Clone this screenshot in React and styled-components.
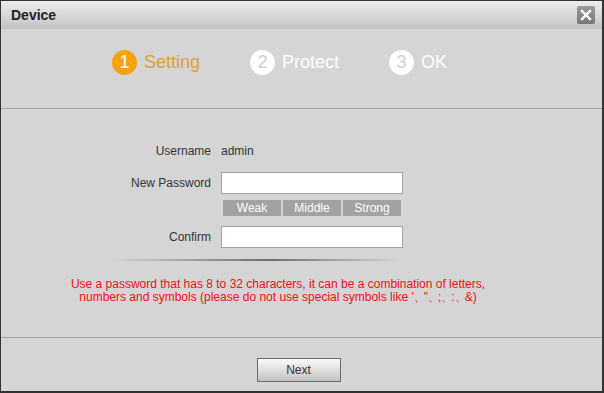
import React from 'react';
import styled, { createGlobalStyle } from 'styled-components';

const GlobalStyle = createGlobalStyle`
  html, body {
    margin: 0;
    padding: 0;
    background: #2e2e2e;
  }
  * {
    box-sizing: border-box;
  }
`;

const steps = [
  { num: 1, label: 'Setting', active: true },
  { num: 2, label: 'Protect' },
  { num: 3, label: 'OK' },
];

const strengths = ['Weak', 'Middle', 'Strong'];

function App() {
  return (
    <>
      <GlobalStyle />
      <Dialog>
        <TitleBar>
          <Title>Device</Title>
          <CloseButton aria-label="close">
            <svg width="12" height="12" viewBox="0 0 12 12">
              <path d="M2 2 L10 10 M10 2 L2 10" stroke="#fff" strokeWidth="2.4" strokeLinecap="square" />
            </svg>
          </CloseButton>
        </TitleBar>

        <Steps>
          {steps.map((s) => (
            <Step key={s.num}>
              <StepCircle $active={s.active}>{s.num}</StepCircle>
              <StepLabel $active={s.active}>{s.label}</StepLabel>
            </Step>
          ))}
        </Steps>

        <Form>
          <Row $mt={0} $h={22}>
            <Label>Username</Label>
            <Value>admin</Value>
          </Row>
          <Row $mt={10} $h={22}>
            <Label>New Password</Label>
            <Input type="password" />
          </Row>
          <Row $mt={6} $h={16}>
            <span />
            <Strength>
              {strengths.map((s) => (
                <StrengthBox key={s}>{s}</StrengthBox>
              ))}
            </Strength>
          </Row>
          <Row $mt={10} $h={22}>
            <Label>Confirm</Label>
            <Input type="password" />
          </Row>
        </Form>

        <FadeLine />

        <Notice>
          Use a password that has 8 to 32 characters, it can be a combination of letters,
          <br />
          numbers and symbols (please do not use special symbols like '<Sym>、</Sym>"<Sym>、</Sym>;<Sym>、</Sym>:<Sym>、</Sym>&amp;)
        </Notice>

        <Footer>
          <NextButton>Next</NextButton>
        </Footer>
      </Dialog>
    </>
  );
}

export default App;

const Dialog = styled.div`
  width: 604px;
  height: 393px;
  display: flex;
  flex-direction: column;
  background: #d5d5d5;
  border-style: solid;
  border-color: #333;
  border-width: 1px 2px 2px 1px;
  font-family: 'Liberation Sans', Arial, sans-serif;
  font-size: 12px;
  color: #333;
`;

const TitleBar = styled.div`
  height: 28px;
  flex-shrink: 0;
  display: flex;
  align-items: center;
  justify-content: space-between;
  padding: 0 7px 0 10px;
  background: linear-gradient(to bottom, #ececec, #c3c3c3);
`;

const Title = styled.div`
  font-weight: bold;
  font-size: 14px;
  color: #222;
`;

const CloseButton = styled.button`
  width: 18px;
  height: 18px;
  padding: 0;
  border: none;
  border-radius: 2px;
  display: flex;
  align-items: center;
  justify-content: center;
  background: linear-gradient(to bottom, #9a9a9a, #777);
  cursor: pointer;
`;

const Steps = styled.div`
  height: 80px;
  flex-shrink: 0;
  display: flex;
  align-items: flex-start;
  gap: 50px;
  padding: 21px 0 0 111px;
  border-bottom: 1px solid #a6a6a6;
`;

const Step = styled.div`
  display: flex;
  align-items: center;
  gap: 7px;
`;

const StepCircle = styled.div`
  width: 25px;
  height: 25px;
  border-radius: 50%;
  display: flex;
  align-items: center;
  justify-content: center;
  font-size: 18px;
  background: ${(p) => (p.$active ? '#f5a20f' : '#ffffff')};
  color: ${(p) => (p.$active ? '#ffffff' : '#cfcfcf')};
`;

const StepLabel = styled.span`
  font-size: 18px;
  color: ${(p) => (p.$active ? '#dca136' : '#ffffff')};
`;

const Form = styled.div`
  padding-top: 31px;
  display: flex;
  flex-direction: column;
`;

const Row = styled.div`
  display: grid;
  grid-template-columns: 210px 182px;
  column-gap: 10px;
  align-items: center;
  height: ${(p) => p.$h}px;
  margin-top: ${(p) => p.$mt}px;
`;

const Label = styled.span`
  text-align: right;
  color: #333;
`;

const Value = styled.span`
  color: #333;
`;

const Input = styled.input`
  width: 182px;
  height: 22px;
  border: 1px solid #a2a2a2;
  background: #fff;
  outline: none;
`;

const Strength = styled.div`
  display: flex;
  gap: 2px;
  padding-left: 2px;
`;

const StrengthBox = styled.div`
  width: 58px;
  height: 16px;
  line-height: 16px;
  text-align: center;
  background: #a2a2a2;
  color: #fff;
  font-size: 12px;
`;

const FadeLine = styled.div`
  width: 290px;
  height: 2px;
  flex-shrink: 0;
  margin: 11px 0 0 109px;
  background: linear-gradient(to right, rgba(120, 120, 120, 0), #6e6e6e 55%, rgba(120, 120, 120, 0));
`;

const Notice = styled.div`
  width: 554px;
  margin-top: 17px;
  text-align: center;
  line-height: 13px;
  color: #ee1111;
`;

const Sym = styled.span`
  letter-spacing: -2px;
`;

const Footer = styled.div`
  margin-top: auto;
  height: 54px;
  flex-shrink: 0;
  border-top: 1px solid #a6a6a6;
  display: flex;
  justify-content: center;
  align-items: flex-start;
  padding: 20px 6px 0 0;
`;

const NextButton = styled.button`
  width: 84px;
  height: 24px;
  border: 1px solid #6a6a6a;
  background: linear-gradient(to bottom, #fbfbfb, #c2c2c2);
  font-family: 'Liberation Sans', Arial, sans-serif;
  font-size: 12px;
  color: #333;
  cursor: pointer;
`;
